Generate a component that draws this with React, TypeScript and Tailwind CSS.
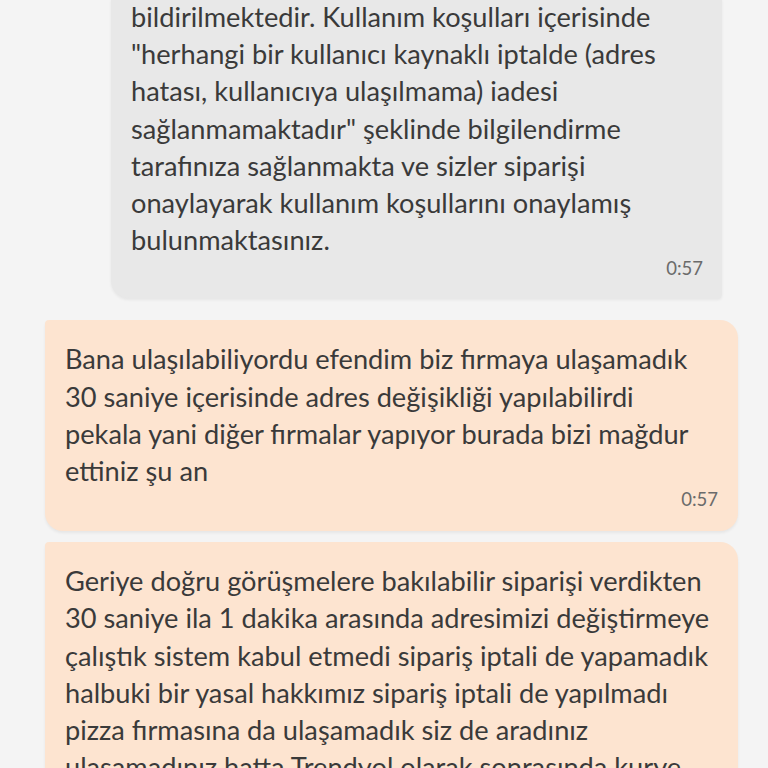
const font = { fontFamily: 'Lato, "Noto Sans", sans-serif' };

function Bubble({
  text,
  time,
  tone,
  className,
}: {
  text: string[];
  time?: string;
  tone: 'gray' | 'peach';
  className: string;
}) {
  const bg = tone === 'gray' ? 'bg-[#e8e8e8]' : 'bg-[#fde4d0]';
  return (
    <div className={`${bg} ${className} shadow-[0_2px_3px_rgba(0,0,0,0.06)]`}>
      <div className="text-[27.2px] leading-[37.2px] text-[#3a3a3a] whitespace-nowrap">
        {text.map((line, i) => (
          <div key={i}>{line}</div>
        ))}
      </div>
      {time && (
        <div className="text-right text-[18.5px] leading-[20px] text-[#6b6b6b]">{time}</div>
      )}
    </div>
  );
}

export default function App() {
  return (
    <div className="w-[768px] h-[768px] overflow-hidden bg-[#f4f4f4]" style={font}>
      <div className="flex flex-col">
        <Bubble
          tone="gray"
          className="ml-[111px] mr-[46px] -mt-[2px] pl-[20px] pr-[19px] pb-[20px] rounded-bl-[18px] rounded-br-[4px]"
          time="0:57"
          text={[
            'bildirilmektedir. Kullanım koşulları içerisinde',
            '"herhangi bir kullanıcı kaynaklı iptalde (adres',
            'hatası, kullanıcıya ulaşılmama) iadesi',
            'sağlanmamaktadır" şeklinde bilgilendirme',
            'tarafınıza sağlanmakta ve sizler siparişi',
            'onaylayarak kullanım koşullarını onaylamış',
            'bulunmaktasınız.',
          ]}
        />
        <Bubble
          tone="peach"
          className="ml-[45px] mr-[30px] mt-[22px] pl-[20px] pr-[20px] pt-[20px] pb-[22px] rounded-tl-[4px] rounded-tr-[18px] rounded-b-[18px]"
          time="0:57"
          text={[
            'Bana ulaşılabiliyordu efendim biz fırmaya ulaşamadık',
            '30 saniye içerisinde adres değişikliği yapılabilirdi',
            'pekala yani diğer fırmalar yapıyor burada bizi mağdur',
            'ettiniz şu an',
          ]}
        />
        <Bubble
          tone="peach"
          className="ml-[45px] mr-[30px] mt-[11px] pl-[20px] pr-[20px] pt-[20px] pb-[20px] rounded-tl-[4px] rounded-tr-[18px] rounded-b-[18px]"
          text={[
            'Geriye doğru görüşmelere bakılabilir siparişi verdikten',
            '30 saniye ila 1 dakika arasında adresimizi değiştirmeye',
            'çalıştık sistem kabul etmedi sipariş iptali de yapamadık',
            'halbuki bir yasal hakkımız sipariş iptali de yapılmadı',
            'pizza fırmasına da ulaşamadık siz de aradınız',
            'ulaşamadınız hatta Trendyol olarak sonrasında kurye',
            'ile de iletişime geçtiniz',
          ]}
        />
      </div>
    </div>
  );
}
